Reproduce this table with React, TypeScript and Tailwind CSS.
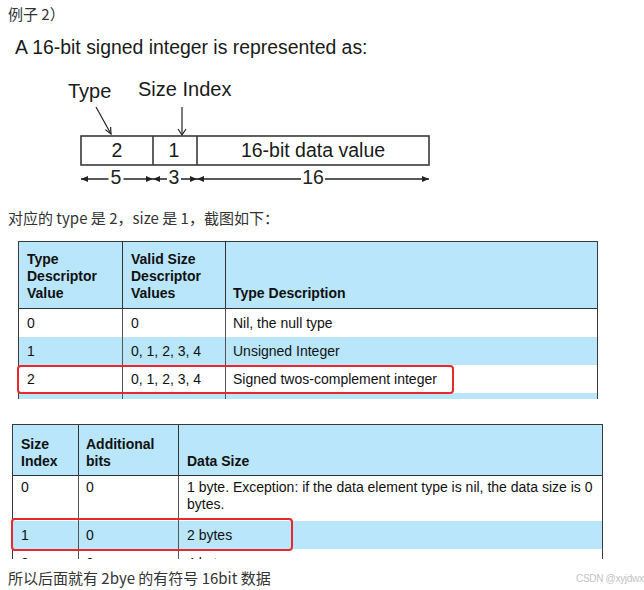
import React from "react";

const cjk = "font-['Noto_Sans_CJK_SC','Noto_Sans_CJK_SC',sans-serif]";
const arial = "font-['Liberation_Sans',Arial,sans-serif]";

const typeRows = [
  ["0", "0", "Nil, the null type"],
  ["1", "0, 1, 2, 3, 4", "Unsigned Integer"],
  ["2", "0, 1, 2, 3, 4", "Signed twos-complement integer"],
  ["", "", ""],
];

const sizeRows = [
  ["0", "0", "1 byte. Exception: if the data element type is nil, the data size is 0 bytes."],
  ["1", "0", "2 bytes"],
  ["2", "0", "4 bytes"],
];

const DimArrow = ({ from, to, label, lx, lw }: { from: number; to: number; label: string; lx: number; lw: number }) => (
  <g>
    <line x1={from} y1={179} x2={to} y2={179} stroke="#222" strokeWidth={1.3} />
    <polygon points={`${from},179 ${from + 7},176 ${from + 7},182`} fill="#222" />
    <polygon points={`${to},179 ${to - 7},176 ${to - 7},182`} fill="#222" />
    <rect x={lx - lw / 2} y={166} width={lw} height={21} fill="#fff" />
    <text x={lx} y={184} textAnchor="middle" fontSize={19.5} fill="#222">
      {label}
    </text>
  </g>
);

const Diagram = () => (
  <svg width={440} height={125} viewBox="0 70 440 125" className={`block ${arial}`}>
    <text x={68} y={98} fontSize={20} fill="#1a1a1a">Type</text>
    <text x={138} y={96} fontSize={20} fill="#1a1a1a">Size Index</text>
    {/* pointers */}
    <g stroke="#222" strokeWidth={1.2} fill="none">
      <line x1={96} y1={107} x2={111} y2={134} />
      <polyline points="105.3,129.6 111,134 110.6,127" />
      <line x1={182} y1={107} x2={182} y2={135} />
      <polyline points="178,129 182,135 186,129" />
    </g>
    <rect x={81} y={136} width={348} height={29} fill="#fff" stroke="#3a3a3a" strokeWidth={1.6} />
    <line x1={153} y1={136} x2={153} y2={165} stroke="#3a3a3a" strokeWidth={1.6} />
    <line x1={197} y1={136} x2={197} y2={165} stroke="#3a3a3a" strokeWidth={1.6} />
    <text x={117} y={157} textAnchor="middle" fontSize={19.5} fill="#1a1a1a">2</text>
    <text x={174} y={157} textAnchor="middle" fontSize={19.5} fill="#1a1a1a">1</text>
    <text x={313} y={157} textAnchor="middle" fontSize={19.5} fill="#1a1a1a">16-bit data value</text>
    <DimArrow from={81} to={153} label="5" lx={116} lw={15} />
    <DimArrow from={153} to={197} label="3" lx={174} lw={14} />
    <DimArrow from={197} to={429} label="16" lx={313} lw={24} />
  </svg>
);

const TypeTable = () => (
  <div className="relative mt-[11px]">
    <div className={`ml-[18px] h-[158px] w-[580px] overflow-hidden border-x border-t border-[#3a3a3a] text-[14px] leading-[17px] text-[#111] ${arial}`}>
      <div className="grid h-[67px] grid-cols-[104px_103px_1fr] border-b border-[#333] bg-[#b9e6fb] font-bold">
        <div className="flex items-end border-r border-[#333] px-[8px] pb-[6px]">
          Type
          <br />
          Descriptor
          <br />
          Value
        </div>
        <div className="flex items-end border-r border-[#333] px-[8px] pb-[6px]">
          Valid Size
          <br />
          Descriptor
          <br />
          Values
        </div>
        <div className="flex items-end px-[7px] pb-[6px]">Type Description</div>
      </div>
      {typeRows.map((r, i) => (
        <div key={i} className={`grid h-[28px] grid-cols-[104px_103px_1fr] ${i % 2 ? "bg-[#b9e6fb]" : "bg-white"}`}>
          <div className="flex items-center border-r border-[#555] px-[8px]">{r[0]}</div>
          <div className="flex items-center border-r border-[#555] px-[8px]">{r[1]}</div>
          <div className="flex items-center px-[7px]">{r[2]}</div>
        </div>
      ))}
    </div>
    <div className="absolute left-[17px] top-[124px] h-[29px] w-[437px] rounded-[4px] border-2 border-[#e8282b]" />
  </div>
);

const SizeTable = () => (
  <div className="relative mt-[25px]">
    <div className={`ml-[12px] h-[135px] w-[591px] overflow-hidden border-x border-t border-[#3a3a3a] text-[14px] leading-[17px] text-[#111] ${arial}`}>
      <div className="grid h-[51px] grid-cols-[66px_100px_1fr] border-b border-[#333] bg-[#b9e6fb] font-bold">
        <div className="flex items-end border-r border-[#333] px-[8px] pb-[5px]">
          Size
          <br />
          Index
        </div>
        <div className="flex items-end border-r border-[#333] px-[7px] pb-[5px]">
          Additional
          <br />
          bits
        </div>
        <div className="flex items-end px-[8px] pb-[5px]">Data Size</div>
      </div>
      {sizeRows.map((r, i) => (
        <div
          key={r[0]}
          className={`grid grid-cols-[66px_100px_1fr] ${i === 0 ? "h-[45px] items-stretch" : "h-[28px]"} ${i % 2 ? "bg-[#b9e6fb]" : "bg-white"}`}
        >
          <div className={`flex border-r border-[#555] px-[8px] ${i === 0 ? "items-start pt-[3px]" : "items-center"}`}>{r[0]}</div>
          <div className={`flex border-r border-[#555] px-[7px] ${i === 0 ? "items-start pt-[3px]" : "items-center"}`}>{r[1]}</div>
          <div className={`flex pl-[8px] pr-[2px] ${i === 0 ? "items-start pt-[3px]" : "items-center"}`}>{r[2]}</div>
        </div>
      ))}
    </div>
    <div className="absolute left-[11px] top-[94px] h-[33px] w-[282px] rounded-[4px] border-2 border-[#e8282b]" />
  </div>
);

export default function App() {
  return (
    <div className={`h-[590px] w-[644px] overflow-hidden bg-white text-[#333] ${cjk}`}>
      <div className="h-[28px] pl-[8px] text-[15px] leading-[28px]">例子 2）</div>
      <div className={`mt-[7px] h-[24px] pl-[15px] text-[19.4px] leading-[24px] text-[#1a1a1a] ${arial}`}>
        A 16-bit signed integer is represented as:
      </div>
      <div className="mt-[11px]">
        <Diagram />
      </div>
      <div className="mt-[11px] h-[24px] pl-[8px] text-[15px] leading-[24px]">对应的 type 是 2，size 是 1，截图如下：</div>
      <TypeTable />
      <SizeTable />
      <div className="mt-[7px] flex h-[24px] items-center">
        <div className="pl-[8px] text-[15px] leading-[24px]">所以后面就有 2bye 的有符号 16bit 数据</div>
        <div className="ml-auto w-[68px] shrink-0 overflow-hidden whitespace-nowrap font-['Liberation_Sans_Narrow','Liberation_Sans',sans-serif] text-[10px] tracking-[-0.3px] text-[#c4c4c4]">
          CSDN @xyjdwxzxxbw
        </div>
      </div>
    </div>
  );
}
